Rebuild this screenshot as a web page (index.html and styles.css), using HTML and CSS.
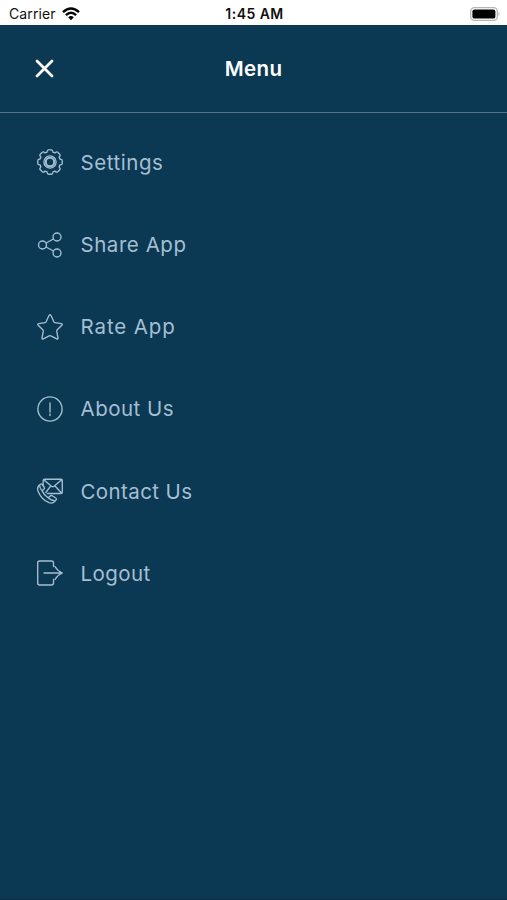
FILE: index.html
```html
<!DOCTYPE html>
<html lang="en">
<head>
<meta charset="utf-8">
<title>Menu</title>
<link rel="stylesheet" href="styles.css">
</head>
<body>
<div class="status">
  <div class="carrier"><span>Carrier</span>
    <svg width="18" height="14" viewBox="0 0 18 14" fill="none" stroke="#000" stroke-width="2.5"><path d="M1 5.1Q9-2.2 17 5.1M3.9 8.1Q9 3.5 14.1 8.1"/><path d="M6.2 10.3Q9 7.9 11.8 10.3L9 13.2Z" fill="#000" stroke="none"/></svg>
  </div>
  <div class="time">1:45 AM</div>
  <svg class="battery" width="30" height="14" viewBox="0 0 30 14"><rect x=".7" y=".7" width="26.6" height="12.6" rx="3.8" fill="#fff" stroke="#b5b5b5" stroke-width="1.3"/><rect x="2.4" y="2.4" width="23" height="9.2" rx="2.2"/><path d="M28.5 5Q30.5 7 28.5 9Z" fill="#aaa"/></svg>
</div>
<header class="header">
  <svg class="close" width="19" height="19" viewBox="0 0 19 19"><path d="M2 2L17 17M17 2L2 17"/></svg>
  <h1 class="title">Menu</h1>
</header>
<nav class="menu">
  <a class="item"><svg class="icon" viewBox="-14 -14 28 28"><path d="M-3-9.9Q-2.7-12.2-1.7-12.2H1.7Q2.7-12.2 3-9.9L4.88-9.12Q6.8-10.7 7.5-9.9L9.9-7.5Q10.7-6.8 9.12-4.88L9.9-3Q12.2-2.7 12.2-1.7V1.7Q12.2 2.7 9.9 3L9.12 4.88Q10.7 6.8 9.9 7.5L7.5 9.9Q6.8 10.7 4.88 9.12L3 9.9Q2.7 12.2 1.7 12.2H-1.7Q-2.7 12.2-3 9.9L-4.88 9.12Q-6.8 10.7-7.5 9.9L-9.9 7.5Q-10.7 6.8-9.12 4.88L-9.9 3Q-12.2 2.7-12.2 1.7V-1.7Q-12.2-2.7-9.9-3L-9.12-4.88Q-10.7-6.8-9.9-7.5L-7.5-9.9Q-6.8-10.7-4.88-9.12Z"/><circle r="6.1"/><circle r="4.2" stroke-width="2"/></svg><span class="label settings">Settings</span></a>
  <a class="item"><svg class="icon" viewBox="-14 -14 28 28"><circle cx="-7.5" cy="0" r="4"/><circle cx="7" cy="-8" r="4"/><circle cx="7" cy="8" r="4"/><path d="M-4-2L3.5-6M-4 2L3.5 6"/></svg><span class="label share">Share App</span></a>
  <a class="item"><svg class="icon" viewBox="-14 -14 28 28"><path d="M-1-11.5Q0-13 1-11.5L4-5Q4.3-4.4 5-4.3L11.3-3.4Q13-3 11.8-1.7L7 3.1Q6.6 3.6 6.7 4.2L8 11Q8.1 12.4 6.7 11.9L.8 8.8Q0 8.4-.8 8.8L-6.7 11.9Q-8.1 12.4-8 11L-6.7 4.2Q-6.6 3.6-7 3.1L-11.8-1.7Q-13-3-11.3-3.4L-5-4.3Q-4.3-4.4-4-5Z"/></svg><span class="label rate">Rate App</span></a>
  <a class="item"><svg class="icon" viewBox="-14 -14 28 28"><circle r="12.1"/><path d="M0-6V3M0 5V6.6"/></svg><span class="label about">About Us</span></a>
  <a class="item"><svg class="icon" viewBox="-14 -14 28 28"><path d="M-6.8-6V-10.5Q-6.8-11.8-5.5-11.8H11Q12.3-11.8 12.3-10.5V1.2Q12.3 2.5 11 2.5H-2.5M-6.2-11.2L1.5-4.7Q2.7-3.8 4-4.7L11.7-11.2M-4.2 1.5L.8-5.2M11.5 2L4.8-5.2"/><path d="M-9.2-7Q-14-4.5-11.6 1C-9.4 6.2-5.7 9.8-1 11.7Q3.4 13.2 6 9Q7 7.8 5.5 6.8L2.2 4.7Q.8 4-.2 5.4Q-1.1 7-2.6 6.2Q-6 3.8-7.6.4Q-8.1-.8-6.4-1.6Q-5-2.5-6-4L-7.8-6.5Q-8.4-7.4-9.2-7ZM-10.5-6Q-10.4-2.8-7.6.4M-2.6 6.2Q1.2 9.7 5.3 9.8"/></svg><span class="label contact">Contact Us</span></a>
  <a class="item"><svg class="icon" viewBox="-14 -14 28 28"><path d="M3.5-6.5V-10Q3.5-12 1.5-12H-10.3Q-12.3-12-12.3-10V10Q-12.3 12-10.3 12H1.5Q3.5 12 3.5 10V6.5M-6 0H12M5-6.5Q7.5-2 12.3 0Q7.5 2 5 6.5"/></svg><span class="label logout">Logout</span></a>
</nav>
</body>
</html>
```
FILE: styles.css
```css
* { box-sizing: border-box; }
body { margin: 0; min-height: 900px; background: #0b3853; font-family: Inter, sans-serif; border-bottom: 1px solid #092f48; }
.status { height: 25px; background: #fff; display: grid; grid-template-columns: 1fr auto 1fr; align-items: center; padding: 1px 7px 0 9px; color: #111; font-size: 14px; line-height: 25px; }
.carrier { display: flex; align-items: center; gap: 6px; letter-spacing: .12px; }
.time { font-weight: 600; font-size: 14px; letter-spacing: .45px; line-height: 24px; padding-top: 1px; }
.battery { justify-self: end; }
.header { height: 88px; border-bottom: 1px solid #537489; display: grid; grid-template-columns: 1fr auto 1fr; align-items: center; padding: 0 35px; }
.close { stroke: #fff; stroke-width: 2.8; stroke-linecap: round; }
.title { margin: 0; color: #fff; font-size: 20.5px; font-weight: 600; letter-spacing: .4px; }
.menu { padding-top: 8.3px; }
.item { height: 82.2px; display: flex; align-items: center; gap: 16.5px; padding-left: 36px; }
.icon { width: 28px; height: 28px; fill: none; stroke: #a5bfd2; stroke-width: 1.35; stroke-linejoin: round; stroke-linecap: round; }
.label { color: #a5bfd2; font-size: 20.5px; font-weight: 400; white-space: nowrap; }
.settings { letter-spacing: .55px; }
.share { letter-spacing: .55px; }
.rate { letter-spacing: .9px; }
.about { letter-spacing: .5px; }
.contact { letter-spacing: .4px; }
.logout { letter-spacing: .45px; }
```
